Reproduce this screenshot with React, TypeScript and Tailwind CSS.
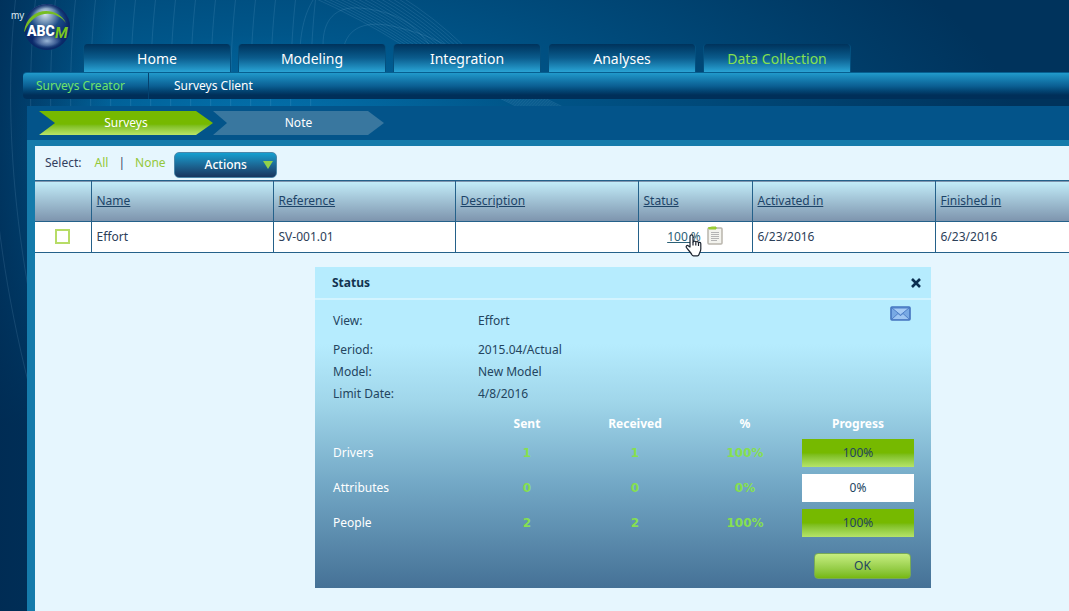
import { clsx } from 'clsx';

const TABS = ['Home', 'Modeling', 'Integration', 'Analyses', 'Data Collection'];

const COLUMNS = [
  { label: 'Name', width: 'w-[182px]' },
  { label: 'Reference', width: 'w-[182px]' },
  { label: 'Description', width: 'w-[183px]' },
  { label: 'Status', width: 'w-[114px]' },
  { label: 'Activated in', width: 'w-[183px]' },
  { label: 'Finished in', width: '' },
];

const DETAILS = [
  { label: 'Period:', value: '2015.04/Actual' },
  { label: 'Model:', value: 'New Model' },
  { label: 'Limit Date:', value: '4/8/2016' },
];

const PROGRESS = [
  { label: 'Drivers', sent: 1, received: 1, percent: 100 },
  { label: 'Attributes', sent: 0, received: 0, percent: 0 },
  { label: 'People', sent: 2, received: 2, percent: 100 },
];

function BackgroundLines() {
  return (
    <svg
      className="pointer-events-none absolute inset-0 h-full w-full"
      fill="none"
      stroke="#9fd4f0"
      strokeOpacity="0.13"
      aria-hidden
    >
      {Array.from({ length: 17 }).map((_, i) => (
        <path key={`v-${i}`} d={`M${i * 20 - 4} -5 C${i * 20 - 16} 100 ${i * 20 - 12} 260 ${i * 20 + 50} 460`} />
      ))}
      {Array.from({ length: 16 }).map((_, i) => (
        <path key={`d-${i}`} d={`M${310 + i * 6} -4 Q${360 + i * 5} 18 ${404 + i * 4} 46 T${520 + i * 3} 108`} />
      ))}
      <path d="M300 48 C302 20 308 8 316 -5 M323 45 C323 20 335 6 360 8 C405 12 420 32 430 46 M344 46 C350 24 372 20 400 28 C425 34 440 42 452 48" />
    </svg>
  );
}

function Logo() {
  return (
    <svg className="mt-1 h-12 w-[83px] shrink-0" viewBox="0 4 83 48" role="img" aria-label="myABCM">
      <defs>
        <radialGradient id="ball" cx="0.46" cy="0.22" r="0.8">
          <stop offset="0" stopColor="#d5e2ee" />
          <stop offset="0.2" stopColor="#7f9dbd" />
          <stop offset="0.42" stopColor="#1c4c87" />
          <stop offset="0.75" stopColor="#09266b" />
          <stop offset="1" stopColor="#0b3b78" />
        </radialGradient>
        <radialGradient id="glow">
          <stop offset="0" stopColor="#a9c6e2" stopOpacity="0.9" />
          <stop offset="1" stopColor="#a9c6e2" stopOpacity="0" />
        </radialGradient>
        <radialGradient id="rim">
          <stop offset="0.8" stopColor="#0a2765" stopOpacity="0" />
          <stop offset="1" stopColor="#0a2765" />
        </radialGradient>
      </defs>
      <circle cx="47" cy="27" r="23" fill="url(#ball)" />
      <ellipse cx="47" cy="41" rx="15" ry="8" fill="url(#glow)" />
      <circle cx="47" cy="27" r="23" fill="url(#rim)" />
      <path d="M24 32 C27 7 57 5 66 23 C56 9 33 10 25 31 Z" fill="#76bd22" />
      <text x="11" y="19" fontSize="10" fill="#dce9f3" className="font-['Liberation_Sans',sans-serif]">
        my
      </text>
      <text x="27" y="36" fontSize="14" fill="#ffffff" className="font-[Roboto,sans-serif] font-black">
        ABC
      </text>
      <text x="55" y="38" fontSize="15" fill="#7ac51f" className="font-[Roboto,sans-serif] font-bold italic">
        M
      </text>
    </svg>
  );
}

function NoteIcon() {
  return (
    <svg width="16" height="19" viewBox="0 0 16 19" fill="none" aria-hidden>
      <rect x="1" y="2" width="14" height="16" rx="1" fill="#f3f3ee" stroke="#b9b5ac" strokeWidth="1.5" />
      <path d="M1 2 L5 1 H9 L9 3 H2" fill="#a5d63a" stroke="#91c62c" />
      <path d="M4 6.5h8M4 8.5h8M4 10.5h8M4 12.5h8M4 14.5h6" stroke="#b4b4b4" />
    </svg>
  );
}

function HandCursor() {
  return (
    <svg
      className="pointer-events-none absolute left-[46px] top-2 z-10"
      width="17"
      height="23"
      viewBox="0 0 17 23"
      fill="#ffffff"
      stroke="#1c2430"
      strokeWidth="1.2"
      strokeLinejoin="round"
      aria-hidden
    >
      <path d="M5 13V2.5C5 .4 8 .4 8 2.5V8c.3-1.3 2.6-1.2 2.8.2.5-1.1 2.5-.8 2.7.5.6-.8 2.3-.4 2.3 1V15c0 2.5-1.3 3.5-1.8 5.5-.2.8-.8 1.3-1.6 1.3H8.5c-.8 0-1.3-.4-1.6-1-1-2.3-3.3-4.3-5.4-7.1C.5 12.2 2.3 10.7 3.5 12Z" />
      <path d="M8 8v3.5M10.8 8.5v3M13.5 9v3" />
    </svg>
  );
}

function MailIcon() {
  return (
    <svg width="21" height="15" viewBox="0 0 21 15" fill="none" aria-hidden>
      <rect x="1" y="1" width="19" height="13" rx="1" fill="#78a9e4" stroke="#4474be" strokeWidth="1.6" />
      <path d="M2 13 L8 7.5 L10.5 9.5 L13 7.5 L19 13" fill="#9dc5f2" stroke="#4f80c8" />
      <path d="M2 2 L10.5 9 L19 2 Z" fill="#a5cbf5" stroke="#4f80c8" />
    </svg>
  );
}

function Header() {
  return (
    <header className="relative">
      <div className="flex h-[72px]">
        <Logo />
        <nav className="flex items-end gap-[7px]" aria-label="Main">
          {TABS.map((tab) => (
            <a
              key={tab}
              href="#"
              className={clsx(
                'flex h-7 w-[148px] items-center justify-center rounded-t border-x border-[#04507f] bg-linear-to-b from-[#00335c] via-[#0b5c8d] to-[#2aa5d6] text-[14px]',
                tab === 'Data Collection' ? 'text-[#86e04f]' : 'text-white',
              )}
            >
              {tab}
            </a>
          ))}
        </nav>
      </div>
      <nav
        className="ml-[23px] flex h-[27px] items-center rounded-l border-t border-[#075f90] bg-linear-to-b from-[#219acb] via-[#0b5f93] via-50% to-[#002f59] to-85% text-[12px]"
        aria-label="Data Collection"
      >
        <a href="#" className="w-[126px] border-r border-[#05426f] py-1 pl-[13px] text-[#6fe36a]">
          Surveys Creator
        </a>
        <a href="#" className="pl-[25px] text-white">
          Surveys Client
        </a>
      </nav>
    </header>
  );
}

function Steps() {
  return (
    <nav className="flex h-[34px] items-center pl-3 text-[12px] text-white" aria-label="Steps">
      <a
        href="#"
        className="flex h-6 w-[174px] items-center justify-center bg-linear-to-b from-[#76b900] from-55% to-[#b9e467] [clip-path:polygon(0_0,calc(100%-17px)_0,100%_50%,calc(100%-17px)_100%,0_100%,16px_50%)]"
      >
        Surveys
      </a>
      <a
        href="#"
        className="flex h-6 w-[171px] items-center justify-center bg-[#39779f] [clip-path:polygon(0_0,calc(100%-16px)_0,100%_50%,calc(100%-16px)_100%,0_100%,14px_50%)]"
      >
        Note
      </a>
    </nav>
  );
}

function Toolbar() {
  return (
    <div className="flex h-[34px] items-center pl-[10px] text-[12px] text-[#33405e]">
      <span>Select:</span>
      <a href="#" className="ml-[13px] text-[#94c83a]">All</a>
      <span className="mx-[10px]">|</span>
      <a href="#" className="text-[#94c83a]">None</a>
      <button
        type="button"
        className="ml-2 mt-1 flex h-[26px] w-[103px] items-center rounded-[5px] border border-[#4b87aa] bg-linear-to-b from-[#149fd0] to-[#17365f] pl-[30px] font-medium text-white"
      >
        <span>Actions</span>
        <svg className="ml-auto mr-[3px]" width="10" height="8" viewBox="0 0 10 8" aria-hidden>
          <path d="M0 0H10L5 8Z" fill="#8fd14a" />
        </svg>
      </button>
    </div>
  );
}

function SurveyTable() {
  return (
    <table className="w-full table-fixed border-collapse text-left text-[12px] text-[#2c4059]">
      <thead>
        <tr className="h-[41px] border-y border-[#24618a] bg-linear-to-b from-[#c2ecf8] to-[#7e95ae]">
          <th className="w-14" aria-label="Selected" />
          {COLUMNS.map((column) => (
            <th key={column.label} className={clsx('border-l border-[#24618a] px-[5px] font-normal', column.width)}>
              <a href="#" className="text-[#1d4468] underline">{column.label}</a>
            </th>
          ))}
        </tr>
      </thead>
      <tbody>
        <tr className="h-[31px] border-b border-[#24618a] bg-white">
          <td className="pb-[2px] text-center">
            <input
              type="checkbox"
              aria-label="Select Effort"
              className="mx-auto block size-[15px] appearance-none border-2 border-[#b7dc66] bg-white"
            />
          </td>
          <td className="border-l border-[#24618a] px-[5px]">Effort</td>
          <td className="border-l border-[#24618a] px-[5px]">SV-001.01</td>
          <td className="border-l border-[#24618a] px-[5px]" />
          <td className="border-l border-[#24618a]">
            <div className="relative flex items-center justify-center gap-[6px]">
              <a href="#" className="text-[#2c6076] underline">100 %</a>
              <span className="pb-1">
                <NoteIcon />
              </span>
              <HandCursor />
            </div>
          </td>
          <td className="border-l border-[#24618a] px-[5px]">6/23/2016</td>
          <td className="border-l border-[#24618a] px-[5px]">6/23/2016</td>
        </tr>
      </tbody>
    </table>
  );
}

function StatusDialog() {
  return (
    <section
      role="dialog"
      aria-labelledby="status-title"
      className="ml-[280px] mt-[14px] w-[616px] bg-[linear-gradient(#b6ecfe_24%,#a0d6ea_42%,#72a7c5_68%,#457196)] text-[12px] text-[#24455f]"
    >
      <header className="flex h-[33px] items-center justify-between border-b-2 border-[#d3f4ff] pl-[17px] pr-[10px]">
        <h2 id="status-title" className="text-[12px] font-bold text-[#123350]">Status</h2>
        <button type="button" aria-label="Close" className="text-[#0b2f50]">
          <svg width="10" height="10" viewBox="0 0 10 10" stroke="currentColor" strokeWidth="2.6" aria-hidden>
            <path d="M1 1L9 9M9 1L1 9" />
          </svg>
        </button>
      </header>

      <dl className="px-[18px] pt-2">
        <div className="flex h-[26px] items-center">
          <dt className="w-[145px]">View:</dt>
          <dd>Effort</dd>
          <dd className="mb-4 ml-auto mr-[2px]">
            <button type="button" aria-label="Send e-mail" className="block">
              <MailIcon />
            </button>
          </dd>
        </div>
        <div className="pt-[5px]">
          {DETAILS.map((detail) => (
            <div key={detail.label} className="flex h-[22px] items-center">
              <dt className="w-[145px]">{detail.label}</dt>
              <dd>{detail.value}</dd>
            </div>
          ))}
        </div>
      </dl>

      <table className="ml-[18px] mt-2 w-[582px] table-fixed text-center">
        <thead>
          <tr className="h-[22px] text-white">
            <th className="w-[140px]" aria-label="Group" />
            <th className="w-[108px] font-bold">Sent</th>
            <th className="w-[108px] font-bold">Received</th>
            <th className="w-[112px] font-bold">%</th>
            <th className="font-bold">Progress</th>
          </tr>
        </thead>
        <tbody>
          {PROGRESS.map((row) => (
            <tr key={row.label} className="h-[35px] text-[#86e04f]">
              <th className="text-left font-normal text-white">{row.label}</th>
              <td className="font-['DejaVu_Sans',sans-serif] font-bold">{row.sent}</td>
              <td className="font-['DejaVu_Sans',sans-serif] font-bold">{row.received}</td>
              <td className="font-['DejaVu_Sans',sans-serif] font-bold">{row.percent}%</td>
              <td className="text-[#24455f]">
                <div
                  className={clsx(
                    'mx-auto flex h-7 w-28 items-center justify-center',
                    row.percent > 0 ? 'bg-linear-to-b from-[#76b900] from-50% to-[#b5e468]' : 'bg-white',
                  )}
                >
                  {row.percent}%
                </div>
              </td>
            </tr>
          ))}
        </tbody>
      </table>

      <div className="flex justify-end pb-[9px] pr-5 pt-[13px]">
        <button
          type="button"
          className="h-[26px] w-[97px] rounded-[4px] border border-[#77a956] bg-linear-to-b from-[#c7ee80] to-[#76b80b]"
        >
          OK
        </button>
      </div>
    </section>
  );
}

export default function App() {
  return (
    <div className="relative flex min-h-screen flex-col overflow-hidden bg-[linear-gradient(to_right,rgba(0,42,82,0.75),rgba(0,42,82,0)_110px),radial-gradient(ellipse_760px_300px_at_260px_140px,#0478b5,#00568a_35%,#00335c)] font-['Noto_Sans',sans-serif]">
      <BackgroundLines />
      <Header />
      <main className="relative ml-[27px] mt-[7px] flex grow flex-col bg-[#03548a]">
        <Steps />
        <div className="grow border-l-8 border-t-[6px] border-[#157bab] bg-[#e6f6fe] pb-6">
          <Toolbar />
          <SurveyTable />
          <StatusDialog />
        </div>
      </main>
    </div>
  );
}
